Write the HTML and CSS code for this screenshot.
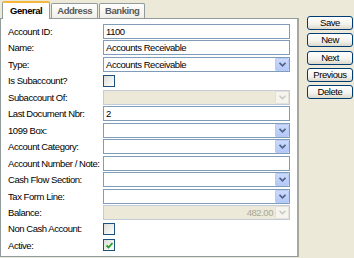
FILE: index.html
```html
<!DOCTYPE html>
<html>
  <head>
    <title>Account</title>
    <link rel="stylesheet" href="styles.css">
  </head>
  <body>
    <div class="window">
      <div class="main">
        <div class="tabs">
          <div class="tab active">General</div>
          <div class="tab">Address</div>
          <div class="tab">Banking</div>
        </div>
        <div class="panel">
          <div class="form">
            <label>Account ID:</label>
            <div class="field"><span class="value">1100</span></div>

            <label>Name:</label>
            <div class="field"><span class="value">Accounts Receivable</span></div>

            <label>Type:</label>
            <div class="field"><span class="value">Accounts Receivable</span><span class="drop"><svg width="7" height="5" viewBox="0 0 7 5"><polyline points="0.5,0.8 3.5,3.8 6.5,0.8" fill="none" stroke="#4d6185" stroke-width="1.6"/></svg></span></div>

            <label>Is Subaccount?</label>
            <div class="checkcell"><span class="check"></span></div>

            <label>Subaccount Of:</label>
            <div class="field disabled"><span class="value"></span><span class="drop off"><svg width="7" height="5" viewBox="0 0 7 5"><polyline points="0.5,0.8 3.5,3.8 6.5,0.8" fill="none" stroke="#c9c7ba" stroke-width="1.4"/></svg></span></div>

            <label>Last Document Nbr:</label>
            <div class="field"><span class="value">2</span></div>

            <label>1099 Box:</label>
            <div class="field"><span class="value"></span><span class="drop"><svg width="7" height="5" viewBox="0 0 7 5"><polyline points="0.5,0.8 3.5,3.8 6.5,0.8" fill="none" stroke="#4d6185" stroke-width="1.6"/></svg></span></div>

            <label>Account Category:</label>
            <div class="field"><span class="value"></span><span class="drop"><svg width="7" height="5" viewBox="0 0 7 5"><polyline points="0.5,0.8 3.5,3.8 6.5,0.8" fill="none" stroke="#4d6185" stroke-width="1.6"/></svg></span></div>

            <label>Account Number / Note:</label>
            <div class="field"><span class="value"></span></div>

            <label>Cash Flow Section:</label>
            <div class="field"><span class="value"></span><span class="drop"><svg width="7" height="5" viewBox="0 0 7 5"><polyline points="0.5,0.8 3.5,3.8 6.5,0.8" fill="none" stroke="#4d6185" stroke-width="1.6"/></svg></span></div>

            <label>Tax Form Line:</label>
            <div class="field"><span class="value"></span><span class="drop"><svg width="7" height="5" viewBox="0 0 7 5"><polyline points="0.5,0.8 3.5,3.8 6.5,0.8" fill="none" stroke="#4d6185" stroke-width="1.6"/></svg></span></div>

            <label>Balance:</label>
            <div class="field disabled"><span class="value right">482.00</span><span class="drop off"><svg width="7" height="5" viewBox="0 0 7 5"><polyline points="0.5,0.8 3.5,3.8 6.5,0.8" fill="none" stroke="#c9c7ba" stroke-width="1.4"/></svg></span></div>

            <label>Non Cash Account:</label>
            <div class="checkcell"><span class="check"></span></div>

            <label>Active:</label>
            <div class="checkcell"><span class="check"><svg width="9" height="9" viewBox="0 0 9 9"><polyline points="1.5,4.5 3.5,6.5 7.5,2" fill="none" stroke="#21a121" stroke-width="1.8"/></svg></span></div>
          </div>
        </div>
      </div>
      <div class="buttons">
        <button>Save</button>
        <button>New</button>
        <button>Next</button>
        <button>Previous</button>
        <button>Delete</button>
      </div>
    </div>
  </body>
</html>
```

FILE: styles.css
```css
body {
  margin: 0;
  background-color: #ece9d8;
  font-family: "Liberation Sans", Arial, sans-serif;
  font-size: 9.5px;
  letter-spacing: -0.45px;
  color: #000;
}

.window {
  display: flex;
  width: 354px;
  height: 258px;
}

.main {
  width: 299px;
  display: flex;
  flex-direction: column;
}

.tabs {
  display: flex;
  align-items: flex-end;
  height: 18px;
  padding-left: 2px;
}

.tab {
  box-sizing: border-box;
  height: 15px;
  padding: 0 5px;
  margin-right: 1px;
  border: 1px solid #919b9c;
  border-bottom: none;
  border-radius: 2px 2px 0 0;
  background: linear-gradient(#fefefe, #f0efe8);
  color: #5a5a5a;
  font-weight: bold;
  line-height: 14px;
}

.tab.active {
  position: relative;
  z-index: 1;
  height: 18px;
  margin-bottom: -1px;
  padding: 0 7px;
  background: #fff;
  color: #000;
  border-top: 2px solid #f5b83c;
  line-height: 15px;
}

.panel {
  box-sizing: border-box;
  height: 239px;
  border: 1px solid #919b9c;
  border-right: 2px solid #a8a79f;
  background: #fff;
  padding: 5px 0 0 7px;
}

.form {
  display: grid;
  grid-template-columns: 95px 187px;
  grid-auto-rows: 15px;
  row-gap: 1.46px;
}

.form label {
  align-self: center;
  white-space: nowrap;
}

.field {
  box-sizing: border-box;
  display: flex;
  height: 15px;
  border: 1px solid #7f9db9;
  background: #fff;
}

.field.disabled {
  border-color: #c2cbd7;
  background: #ece9d8;
}

.value {
  flex: 1;
  padding-left: 2px;
  line-height: 13px;
}

.value.right {
  text-align: right;
  padding-right: 2px;
  color: #a8a797;
}

.drop {
  box-sizing: border-box;
  width: 14px;
  height: 13px;
  display: flex;
  align-items: center;
  justify-content: center;
  border: 1px solid #b8cbf6;
  border-radius: 1px;
  background: linear-gradient(#cbdafc, #b4c8f8);
}

.drop.off {
  border-color: #e4e2d6;
  background: #f5f4ee;
}

.checkcell {
  display: flex;
  align-items: center;
}

.check {
  box-sizing: border-box;
  width: 12px;
  height: 12px;
  display: flex;
  align-items: center;
  justify-content: center;
  border: 1px solid #1c5180;
  background: linear-gradient(135deg, #dcdcd7, #fff);
}

.buttons {
  display: flex;
  flex-direction: column;
  gap: 3.3px;
  margin-left: 8px;
  padding-top: 16px;
}

button {
  box-sizing: border-box;
  width: 46px;
  height: 14px;
  padding: 0;
  border: 1px solid #003c74;
  border-radius: 3px;
  background: linear-gradient(#fff, #f3f2ec 60%, #dcd8cc);
  font-family: "Liberation Sans", Arial, sans-serif;
  font-size: 9.5px;
  letter-spacing: -0.45px;
  line-height: 12px;
  color: #000;
}
```
